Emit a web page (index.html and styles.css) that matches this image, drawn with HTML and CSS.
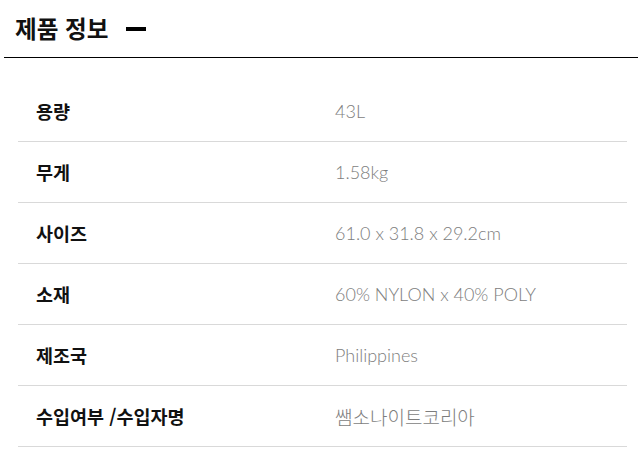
FILE: index.html
```html
<!DOCTYPE HTML>
<html lang="ko">
<head>
	<meta charset="UTF-8">
	<title>제품 정보</title>
	<link rel="stylesheet" href="styles.css">
</head>
<body>
	<div class="spec">
		<div class="spec_head">
			<h2 class="spec_title">제품 정보</h2>
			<span class="spec_toggle"></span>
		</div>
		<!-- spec_head end -->
		<ul class="spec_list">
			<li><span class="spec_key">용량</span><span class="spec_val">43L</span></li>
			<li><span class="spec_key">무게</span><span class="spec_val">1.58kg</span></li>
			<li><span class="spec_key">사이즈</span><span class="spec_val">61.0 x 31.8 x 29.2cm</span></li>
			<li><span class="spec_key">소재</span><span class="spec_val">60% NYLON x 40% POLY</span></li>
			<li><span class="spec_key">제조국</span><span class="spec_val">Philippines</span></li>
			<li><span class="spec_key">수입여부 /수입자명</span><span class="spec_val spec_val_ko">쌤소나이트코리아</span></li>
		</ul>
		<!-- spec_list end -->
	</div>
	<!-- spec end -->
</body>
</html>
```

FILE: styles.css
```css
body {
		margin:0;
		background:#fff;
		font-family:"Noto Sans CJK KR", sans-serif;
	}
.spec {
		width:634px;
		margin-left:4px;
	}
.spec_head {
		display:flex;
		align-items:center;
		height:57px;
		padding-left:11px;
		border-bottom:1px solid #000;
	}
.spec_title {
		margin:0;
		font-size:23.6px;
		font-weight:700;
		color:#111;
		line-height:1;
	}
.spec_toggle {
		width:20px;
		height:4px;
		margin-left:18px;
		background:#000;
	}
.spec_list {
		list-style:none;
		width:609px;
		margin:23px 0 0 14px;
		padding:0;
	}
.spec_list li {
		display:flex;
		align-items:center;
		height:60px;
		border-bottom:1px solid #d9d9d9;
	}
.spec_key {
		width:299px;
		padding-left:18px;
		font-size:18.5px;
		font-weight:700;
		color:#111;
	}
.spec_val {
		font:300 18px "Lato", "Noto Sans CJK KR", sans-serif;
		color:#7d7d7d;
	}
.spec_val_ko {
		font-size:19px;
	}
```
